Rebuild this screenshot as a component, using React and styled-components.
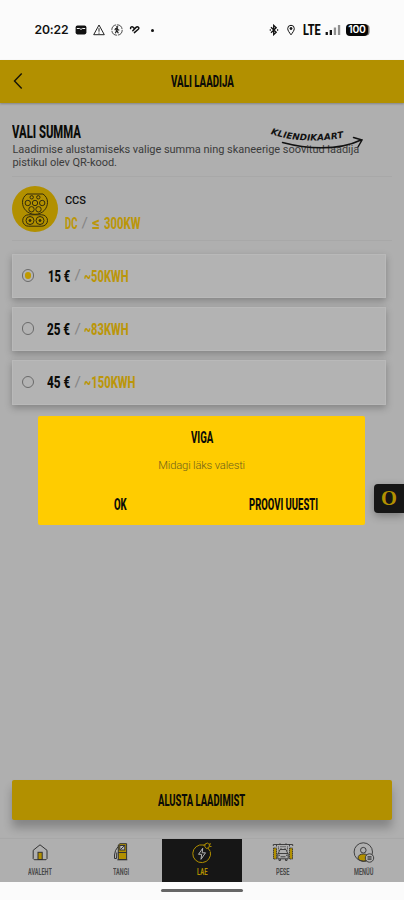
import React, { useLayoutEffect, useRef, useState } from "react";
import styled, { createGlobalStyle } from "styled-components";

const amounts = [
	{ price: "15 €", priceWidth: 21.8, energy: "~50KWH", energyWidth: 44.7 },
	{ price: "25 €", priceWidth: 22.8, energy: "~83KWH", energyWidth: 44.7 },
	{ price: "45 €", priceWidth: 23, energy: "~150KWH", energyWidth: 51.7 },
];

// condensed headline lettering, squeezed to the given width
function Headline({ width, size = 17.4, color, weight, children }) {
	const ref = useRef(null);
	const [scale, setScale] = useState(0.6);
	useLayoutEffect(() => {
		setScale(width / ref.current.offsetWidth);
	}, [width, children]);
	return (
		<HeadlineBox $width={width} $size={size} $color={color} $weight={weight}>
			<span ref={ref} style={{ transform: `scaleX(${scale})` }}>
				{children}
			</span>
		</HeadlineBox>
	);
}

function StatusBar() {
	return (
		<Status>
			<StatusGroup>
				<Clock>20:22</Clock>
				<svg width="12" height="12" viewBox="0 0 12 12">
					<rect x="0.6" y="1.6" width="10.8" height="8.8" rx="1.8" fill="#111" />
					<path d="M1.800 4.500h2.800c.5.900 2.300.9 2.800 0h2.800" stroke="#fbfbfb" strokeWidth="1" fill="none" />
				</svg>
				<svg width="12" height="12" viewBox="0 0 12 12" fill="none" stroke="#222" strokeWidth="1">
					<path d="M6 1 11.300 10.700H.7ZM6 4.200V7.700M6 8.600v1.100" />
				</svg>
				<svg width="12" height="12" viewBox="0 0 12 12" fill="none" stroke="#222" strokeWidth="0.8">
					<circle cx="6" cy="6" r="5.200" strokeDasharray="7 1" />
					<circle cx="6.200" cy="2.900" r="0.700" fill="#222" />
					<path d="M6 4.200 5.600 6.800 4.300 9.300M5.800 6.600l1.600 2.700M3.900 6.200 4.500 4.800 6 4.300l1 1.400 1.300.5" strokeWidth="1.200" />
				</svg>
				<svg width="12" height="12" viewBox="0 0 12 12" fill="none" stroke="#111" strokeWidth="1.500" strokeLinecap="round">
					<path d="M1.600 4.600C1.300 3 3 2.200 4.200 3.300L5 4.100M3.800 6.700 7 3.400c1.200-1.100 3.200-.4 2.800 1.200M5.400 8.600 9.300 5.300" />
				</svg>
				<Dot />
			</StatusGroup>
			<StatusGroup $right>
				<svg width="10" height="12" viewBox="0 0 10 12" fill="none" stroke="#111" strokeWidth="1.300">
					<path d="M2 3.300 7.200 8.200 4.700 10.600V1.400L7.200 3.800 2 8.700" />
					<path d="M.7 6h1.200M8 6h1.200" strokeWidth="1.400" />
				</svg>
				<svg width="8" height="12" viewBox="0 0 8 12" fill="none" stroke="#111" strokeWidth="1">
					<path d="M4 10.800C2.500 8.700.7 6.500.7 4.600a3.300 3.300 0 0 1 6.600 0C7.300 6.500 5.500 8.700 4 10.800Z" />
					<circle cx="4" cy="4.500" r="1" fill="#111" />
				</svg>
				<Headline width={17.4} size={14.4} weight={800}>LTE</Headline>
				<svg width="16" height="12" viewBox="0 0 16 12">
					<path d="M.6 8h2.300v3H.6ZM4.700 6h2.300v5H4.700Z" fill="#111" />
					<path d="M8.800 3.500h2.300V11H8.800ZM12.900 1h2.300v10h-2.300Z" fill="#909090" />
				</svg>
				<Battery>100</Battery>
			</StatusGroup>
		</Status>
	);
}

function PlugIcon() {
	return (
		<svg width="46" height="46" viewBox="0 0 46 46" fill="none" stroke="#332b0c" strokeWidth="1">
			<path d="M15 8h16c3 2.200 4.500 4.700 4.500 8.300 0 6.200-5 12-12.500 12S10.500 22.500 10.500 16.300C10.500 12.700 12 10.200 15 8Z" />
			<circle cx="19.700" cy="11.300" r="1.700" />
			<circle cx="26.300" cy="11.300" r="1.700" />
			<circle cx="15.800" cy="17" r="2.700" />
			<circle cx="23" cy="17" r="2.700" />
			<circle cx="30.200" cy="17" r="2.700" />
			<circle cx="19.500" cy="23.300" r="2.700" />
			<circle cx="26.500" cy="23.300" r="2.700" />
			<rect x="10.700" y="28.800" width="24.800" height="11.400" rx="5.700" />
			<circle cx="18" cy="34.500" r="4" />
			<circle cx="28" cy="34.500" r="4" />
			<circle cx="18" cy="34.500" r="1" fill="#332b0c" />
			<circle cx="28" cy="34.500" r="1" fill="#332b0c" />
		</svg>
	);
}

function HomeIcon() {
	return (
		<svg width="20" height="20" viewBox="0 0 20 20" fill="none" stroke="#333" strokeWidth="1">
			<rect x="8" y="9.300" width="4.200" height="7.200" fill="#b29000" />
			<path d="M3.200 7.300 10 1.800l7 5.500v8.400l-1 1H4.200l-1-1Z" />
		</svg>
	);
}

function PumpIcon() {
	return (
		<svg width="20" height="20" viewBox="0 0 20 20" fill="none" stroke="#333" strokeWidth="1">
			<path d="M7.300 2 9 .7h6.600v15.800H7.300Z" fill="#b29000" />
			<rect x="8.800" y="2.500" width="5" height="4.500" fill="#bbb" />
			<path d="m9.300 6.600 4-3.700M7 9.500h8.600M6.300 16.800h10" />
			<path d="M7 3.700 4.500 7.500 3.500 12v3.500h2l.3-6" />
		</svg>
	);
}

function ChargeIcon() {
	return (
		<svg width="24" height="24" viewBox="0 0 24 24" fill="none" stroke="#b29000" strokeWidth="1">
			<path d="M13.500 4A8.900 8.900 0 1 0 20.300 10.500" />
			<path d="M12.700 7.300 8.500 13.300h3.200L11 18.300l4.500-6.500h-3.300Z" stroke="#b5b5b5" />
			<path d="M13 4.300l2.200-.6M15 3.200 17.300 2l2.200 1.600-.6 3-2.500.9-1.600-2ZM19 3.200l2-.4M19.500 5.300l2 .2M17.800 7l2.300 3" />
		</svg>
	);
}

function WashIcon() {
	return (
		<svg width="22" height="20" viewBox="0 0 22 20" fill="none" stroke="#333" strokeWidth="0.900">
			<path d="M1.300 3V1.500h19.400V3M4.500 1.500v2M8 1.500V.3M14 1.500V.3M17.500 1.500v2" />
			<path d="M6.500 3.500v4M9 3v3M11 3v2M13 3v3M15.500 3.500v4" strokeDasharray="1 0.800" />
			<path d="M1.500 5h3v11h-3ZM17.500 5h3v11h-3Z" fill="#b29000" strokeDasharray="1.400 0.500" />
			<path d="M6.500 10 8 6.500h6l1.500 3.500M5.800 10.500h10.400v5.300H5.800ZM7 16v1.500h1.500V16M13.500 16v1.500H15V16M8.500 13.800h5M6.500 12.300H8M14 12.300h1.500" />
		</svg>
	);
}

function MenuIcon() {
	return (
		<svg width="22" height="22" viewBox="0 0 22 22" fill="none" stroke="#333" strokeWidth="0.900">
			<path d="M5 16.500c0-3.300 2.200-4.500 5.500-4.500s4.500 1.500 5 3v3c-3 2-7.500 2-10.500-1.500Z" fill="#b29000" />
			<circle cx="10.300" cy="10" r="9.200" />
			<circle cx="10.300" cy="8.200" r="2.800" fill="#afafaf" />
			<circle cx="16.500" cy="16" r="4.200" fill="#afafaf" />
			<path d="M14.500 14.700h4M14.500 16h4M14.500 17.300h4" />
		</svg>
	);
}

const tabs = [
	{ label: "AVALEHT", width: 24, icon: <HomeIcon /> },
	{ label: "TANGI", width: 16, icon: <PumpIcon /> },
	{ label: "LAE", width: 10.5, icon: <ChargeIcon />, active: true },
	{ label: "PESE", width: 13.5, icon: <WashIcon /> },
	{ label: "MENÜÜ", width: 19.3, icon: <MenuIcon /> },
];

export default function App() {
	const [selected, setSelected] = useState(0);
	return (
		<Screen>
			<GlobalStyle />
			<StatusBar />
			<Header>
				<Back aria-label="Tagasi">
					<svg width="10" height="18" viewBox="0 0 10 18" fill="none" stroke="#151307" strokeWidth="1.400">
						<path d="M8.700 1.500 1.500 9l7.200 7.500" />
					</svg>
				</Back>
				<Headline width={62.7} size={16.8}>VALI LAADIJA</Headline>
			</Header>
			<Content>
				<Intro>
					<Headline width={68.7} size={18.4}>VALI SUMMA</Headline>
					<p>
						Laadimise alustamiseks valige summa ning skaneerige soovitud laadija
						<br />
						pistikul olev QR-kood.
					</p>
					<ClientCard>
						<svg width="98" height="30" viewBox="0 0 98 30">
							<path id="note" d="M3.500 10C25 17.500 52 18.500 80 13" fill="none" />
							<text>
								<textPath href="#note" textLength="74">KLIENDIKAART</textPath>
							</text>
							<path d="M15.500 18.500C38 24.500 70 27.500 94 16M86.500 13.500 95 16 91 23" fill="none" stroke="#111" strokeWidth="1.500" strokeLinecap="round" />
						</svg>
					</ClientCard>
				</Intro>
				<Charger>
					<PlugCircle>
						<PlugIcon />
					</PlugCircle>
					<div>
						<ChargerName>CCS</ChargerName>
						<Power>
							<Headline width={12.7} color="#bb960a">DC</Headline>
							<Slash />
							<Headline width={8} color="#bb960a">≤</Headline>
							<Headline width={36.5} color="#bb960a">300KW</Headline>
						</Power>
					</div>
				</Charger>
				<Options>
					{amounts.map((amount, index) => (
						<Option key={amount.price} onClick={() => setSelected(index)}>
							<Radio $checked={index === selected} />
							<Price>
								<Headline width={amount.priceWidth}>{amount.price}</Headline>
							</Price>
							<Slash />
							<Headline width={amount.energyWidth} color="#bb960a">
								{amount.energy}
							</Headline>
						</Option>
					))}
				</Options>
				<StartButton>
					<Headline width={87.5} size={16.6}>ALUSTA LAADIMIST</Headline>
				</StartButton>
			</Content>
			<TabBar>
				{tabs.map((tab) => (
					<Tab key={tab.label} $active={tab.active}>
						<TabIcon>{tab.icon}</TabIcon>
						<Headline width={tab.width} size={9.6} weight={700} color={tab.active ? "#b29000" : "#4a4a4a"}>
							{tab.label}
						</Headline>
					</Tab>
				))}
			</TabBar>
			<GestureBar>
				<span />
			</GestureBar>
			<Dialog role="alertdialog">
				<Headline width={22} size={16.6}>VIGA</Headline>
				<p>Midagi läks valesti</p>
				<DialogActions>
					<button>
						<Headline width={12.7} size={16.6}>OK</Headline>
					</button>
					<button>
						<Headline width={69} size={16.6}>PROOVI UUESTI</Headline>
					</button>
				</DialogActions>
			</Dialog>
			<SideBadge>O</SideBadge>
		</Screen>
	);
}

const GlobalStyle = createGlobalStyle`
	* {
		box-sizing: border-box;
	}
	body {
		margin: 0;
		font-family: Roboto, "Liberation Sans", sans-serif;
	}
	button {
		border: 0;
		padding: 0;
		background: none;
		font: inherit;
		cursor: pointer;
	}
	p {
		margin: 0;
	}
	svg {
		display: block;
		flex: none;
	}
`;
const Screen = styled.div`
	position: relative;
	display: flex;
	flex-direction: column;
	width: 404px;
	height: 900px;
	overflow: hidden;
	background: #afafaf;
`;
const HeadlineBox = styled.span`
	display: block;
	flex: none;
	width: ${(p) => p.$width}px;
	height: ${(p) => p.$size}px;
	line-height: ${(p) => p.$size * 1.08}px;
	font-size: ${(p) => p.$size}px;
	font-weight: ${(p) => p.$weight || 800};
	color: ${(p) => p.$color || "#0b0b08"};
	white-space: nowrap;
	span {
		display: inline-block;
		transform-origin: left center;
	}
`;
const Status = styled.div`
	display: flex;
	justify-content: space-between;
	align-items: center;
	height: 60px;
	flex: none;
	padding: 0 34px 0 34.5px;
	background: #fbfbfb;
`;
const StatusGroup = styled.div`
	display: flex;
	align-items: center;
	gap: ${(p) => (p.$right ? "5px" : "6px")};
	svg:first-child {
		margin-right: ${(p) => (p.$right ? "3px" : 0)};
	}
	svg:nth-child(2) {
		margin-right: ${(p) => (p.$right ? "3px" : 0)};
	}
`;
const Clock = styled.span`
	width: 34px;
	font: 600 12.2px/16px Inter, sans-serif;
	letter-spacing: -0.15px;
	color: #111;
`;
const Dot = styled.span`
	width: 3px;
	height: 3px;
	margin-left: 4px;
	border-radius: 50%;
	background: #111;
`;
const Battery = styled.span`
	width: 22px;
	height: 12px;
	margin-right: 2px;
	border-radius: 4px;
	background: #050505;
	box-shadow: 2px 0 0 -0.5px #777;
	color: #fff;
	font: 600 10.4px/12px Inter, sans-serif;
	letter-spacing: -0.2px;
	text-align: center;
`;
const Header = styled.header`
	position: relative;
	display: flex;
	align-items: center;
	justify-content: center;
	flex: none;
	height: 42.6px;
	padding-bottom: 1.6px;
	background: #b29000;
	box-shadow: 0 1px 2px rgba(0, 0, 0, 0.25);
`;
const Back = styled.button`
	position: absolute;
	left: 13px;
	top: 12.2px;
`;
const Content = styled.main`
	display: flex;
	flex-direction: column;
	flex: 1;
	padding: 19.4px 12.4px 18.9px 12.4px;
`;
const Intro = styled.section`
	position: relative;
	height: 54.8px;
	border-bottom: 1px solid #a8a8a8;
	p {
		margin-top: 3.5px;
		color: #3b3b3b;
		font-size: 11px;
		line-height: 12.8px;
		letter-spacing: -0.03px;
		white-space: nowrap;
	}
`;
const ClientCard = styled.div`
	position: absolute;
	left: 255px;
	top: 2px;
	text {
		font: italic 700 8.8px "DejaVu Sans", sans-serif;
		fill: #111;
	}
`;
const Charger = styled.section`
	display: flex;
	align-items: flex-start;
	gap: 6.5px;
	height: 64.5px;
	padding-top: 9.3px;
	border-bottom: 1px solid #a8a8a8;
`;
const PlugCircle = styled.div`
	width: 46px;
	height: 46px;
	border-radius: 50%;
	background: #b29000;
`;
const ChargerName = styled.div`
	margin-top: 7.7px;
	font-size: 11px;
	line-height: 14px;
	font-weight: 500;
	color: #0d0d0d;
`;
const Power = styled.div`
	display: flex;
	align-items: center;
	gap: 4px;
	margin-top: 6.6px;
`;
const Slash = styled.span`
	flex: none;
	width: 6px;
	height: 12px;
	&::after {
		content: "/";
		display: block;
		color: #858585;
		font-size: 15.5px;
		line-height: 12px;
	}
`;
const Options = styled.div`
	display: flex;
	flex-direction: column;
	gap: 9px;
	padding: 12.5px 5.8px 0 0;
`;
const Option = styled.button`
	display: flex;
	align-items: center;
	height: 44.3px;
	padding: 0 0 1px 8.2px;
	border: 1px solid #b9b9b9;
	background: #b3b3b3;
	box-shadow: 0 3px 7px rgba(0, 0, 0, 0.25);
	text-align: left;
	${Slash} {
		margin: 0 3.5px 0 5px;
	}
`;
const Radio = styled.span`
	display: flex;
	align-items: center;
	justify-content: center;
	width: 12.7px;
	height: 12.7px;
	border: 1px solid #6a6a6a;
	border-radius: 50%;
	&::after {
		content: "";
		width: 6.5px;
		height: 6.5px;
		border-radius: 50%;
		background: ${(p) => (p.$checked ? "#c09a00" : "transparent")};
	}
`;
const Price = styled.span`
	display: flex;
	justify-content: flex-end;
	width: 35.3px;
`;
const StartButton = styled.button`
	display: flex;
	align-items: center;
	justify-content: center;
	height: 39.5px;
	margin-top: auto;
	border-radius: 2px;
	background: #b29000;
	box-shadow: 0 8px 10px rgba(0, 0, 0, 0.24);
`;
const TabBar = styled.nav`
	display: grid;
	grid-template-columns: repeat(5, 1fr);
	flex: none;
	height: 43px;
	background: #afafaf;
	box-shadow: 0 -1px 1px rgba(0, 0, 0, 0.04);
`;
const Tab = styled.button`
	display: flex;
	flex-direction: column;
	align-items: center;
	background: ${(p) => (p.$active ? "#161616" : "transparent")};
`;
const TabIcon = styled.span`
	display: flex;
	align-items: center;
	height: 28.6px;
`;
const GestureBar = styled.div`
	display: flex;
	justify-content: center;
	flex: none;
	height: 18.5px;
	padding-top: 7.7px;
	background: #fbfbfb;
	span {
		width: 82px;
		height: 3.3px;
		border-radius: 2px;
		background: #666;
	}
`;
const Dialog = styled.div`
	position: absolute;
	left: 38px;
	top: 416px;
	display: flex;
	flex-direction: column;
	align-items: center;
	width: 327.3px;
	height: 109px;
	padding-top: 12.6px;
	border-radius: 2px;
	background: #ffcc00;
	p {
		margin-top: 13px;
		color: #6e5f1c;
		font-size: 11.2px;
		line-height: 16px;
		font-weight: 300;
		letter-spacing: -0.16px;
	}
`;
const DialogActions = styled.div`
	display: grid;
	grid-template-columns: 1fr 1fr;
	width: 100%;
	margin-top: 22.2px;
	padding-left: 1px;
	button {
		display: flex;
		justify-content: center;
	}
`;
const SideBadge = styled.div`
	position: absolute;
	right: 0;
	top: 483.5px;
	width: 30px;
	height: 29.5px;
	border-radius: 4px 0 0 4px;
	background: #161616;
	box-shadow: 0 3px 8px rgba(0, 0, 0, 0.3);
	color: #b29000;
	font: 700 20.5px/29px "Liberation Serif", serif;
	text-align: center;
`;
